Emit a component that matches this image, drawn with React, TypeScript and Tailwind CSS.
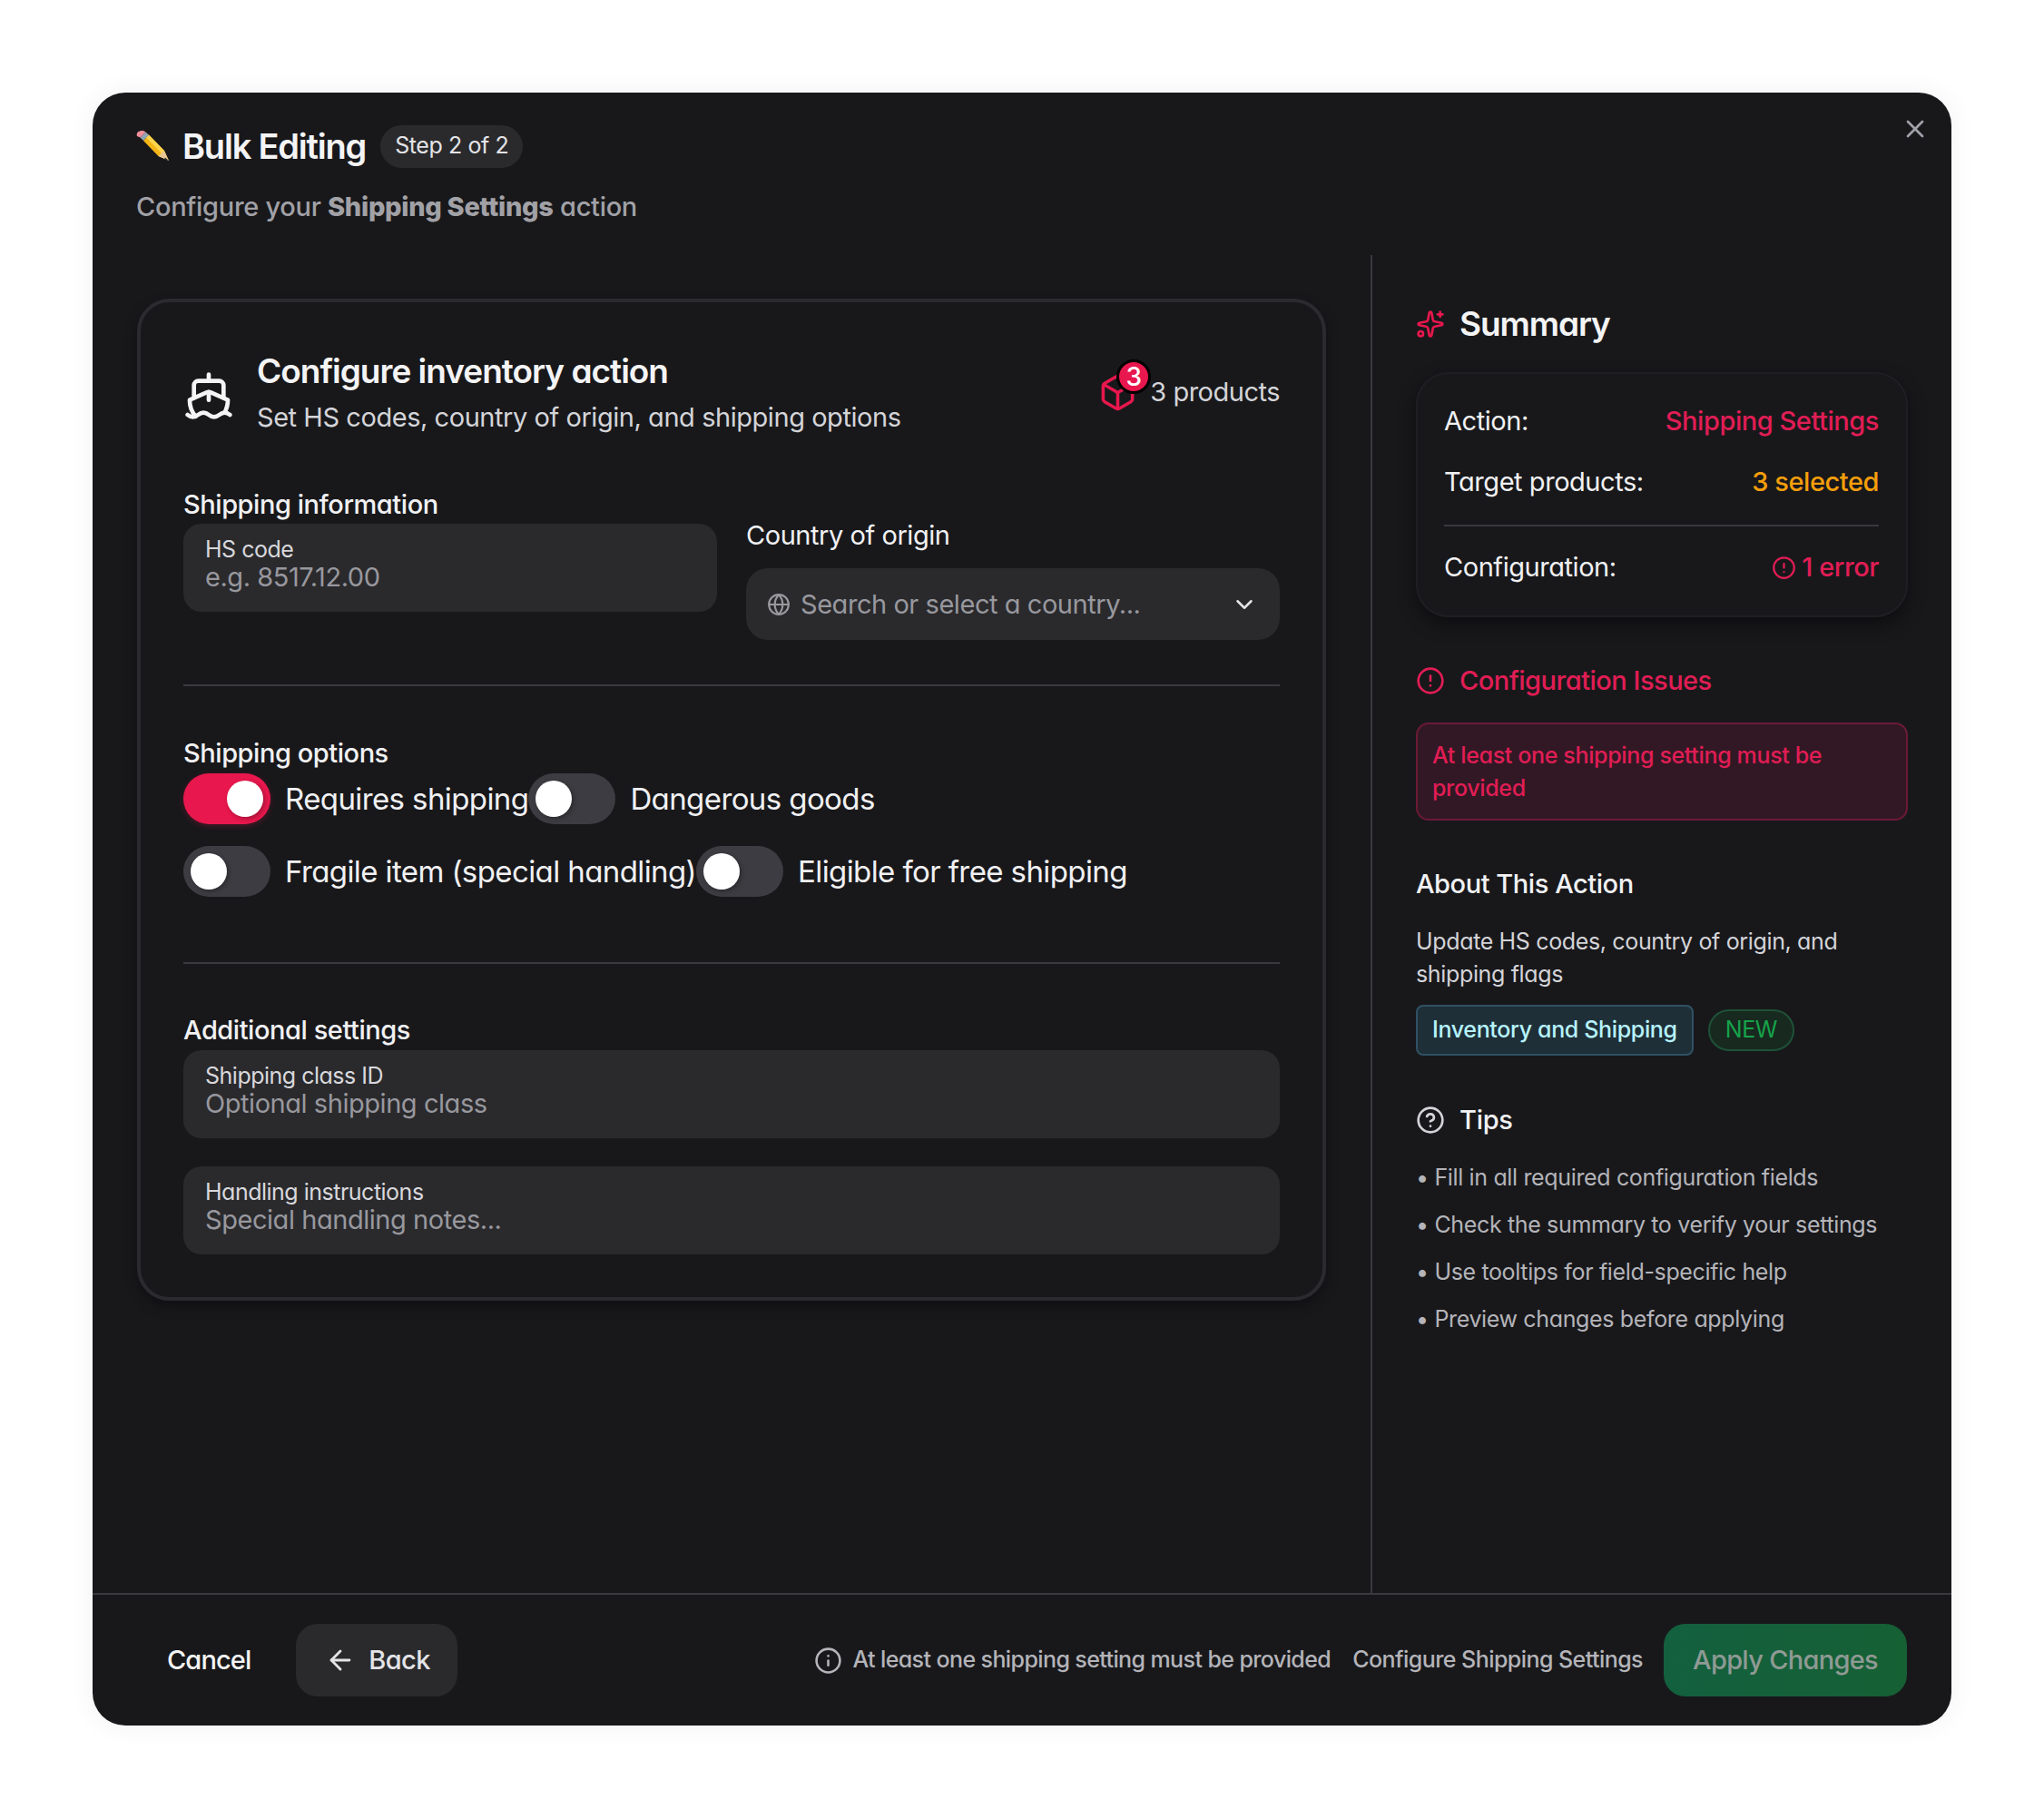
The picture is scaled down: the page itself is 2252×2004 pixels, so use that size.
import { ArrowLeft, Box, ChevronDown, CircleAlert, CircleHelp, Globe, Info, Ship, Sparkles, X } from "lucide-react";

const PencilEmoji = () => (
  <svg width="37" height="34" viewBox="0 0 37 34" className="shrink-0">
    <path d="M8 11 L14 4.5 L31 22 L36 33 L24.500 28 Z" fill="#f5b516" />
    <path d="M14 4.500 L31 22 L28 25 L11 7.500 Z" fill="#fcd34d" />
    <path d="M24.500 28 L36 33 L31 22 Z" fill="#e9c796" />
    <path d="M32 29.500 L36 33 L31 31.500 Z" fill="#2f2f33" />
    <path d="M4.500 7.500 L10.500 1.500 L14 4.500 L8 11 Z" fill="#93a5b5" />
    <path d="M1 6 Q0 2.500 2.500 1 Q5.500 -0.500 8 0 L10.500 1.500 L4.500 7.500 Z" fill="#f08f9c" />
  </svg>
);

function Toggle({ on = false, label }: { on?: boolean; label: string }) {
  return (
    <div className="flex items-center gap-4">
      <div
        className={`flex h-14 w-24 shrink-0 items-center rounded-full px-2 ${
          on ? "justify-end bg-[#e8174d] shadow-[0_2px_6px_rgba(232,23,77,0.25)]" : "justify-start bg-[#3c3c42]"
        }`}
      >
        <div className="size-10 rounded-full bg-white shadow-[2px_2px_5px_rgba(0,0,0,0.3)]" />
      </div>
      <span className="text-[33px] leading-[44px] tracking-[-0.6px] text-[#f1f1f3]">{label}</span>
    </div>
  );
}

function Field({ label, placeholder, className = "" }: { label: string; placeholder: string; className?: string }) {
  return (
    <div className={`flex h-[97px] flex-col rounded-[20px] bg-[#2a2a2d] px-6 pt-3 ${className}`}>
      <span className="text-[25px] leading-[32px] tracking-[-0.5px] text-[#d8d8dc]">{label}</span>
      <span className="text-[29px] leading-[30px] tracking-[-0.45px] text-[#98989e]">{placeholder}</span>
    </div>
  );
}

export default function App() {
  return (
    <div className="min-h-[2004px] bg-white p-[102px] font-['Inter',sans-serif] [font-feature-settings:'cv11']">
      <div className="relative flex h-[1799px] w-[2048px] flex-col overflow-hidden rounded-[36px] bg-[#18181b] shadow-[0_0_30px_rgba(0,0,0,0.06)]">
        <X className="absolute top-[24px] right-[24px] text-[#a1a1aa]" size={32} strokeWidth={2} />

        {/* header */}
        <div className="h-[179px] shrink-0 px-[48px] pt-[35px]">
          <div className="flex items-center">
            <PencilEmoji />
            <h1 className="ml-[14px] text-[38px] leading-[48px] font-semibold tracking-[-1.2px] text-[#f4f4f5]">Bulk Editing</h1>
            <span className="ml-4 flex h-[47px] items-center rounded-full bg-[#2a2a2d] px-4 text-[25px] tracking-[-0.4px] text-[#e4e4e7]">Step 2 of 2</span>
          </div>
          <p className="mt-[21px] text-[29px] leading-[44px] font-medium tracking-[-0.3px] text-[#a1a1a6]">
            Configure your <strong className="font-extrabold">Shipping Settings</strong> action
          </p>
        </div>

        {/* body */}
        <div className="flex min-h-0 flex-1">
          <div className="w-[1410px] shrink-0 border-r-2 border-[#3a3a3e] px-[49px] pt-[48px]">
            <div className="h-[1104px] w-[1310px] rounded-[36px] border-4 border-[#2b2b2f] px-[47px] pt-[54px] shadow-[0_6px_14px_rgba(0,0,0,0.35)]">
              <div className="flex items-center justify-between">
                <div className="flex items-center">
                  <Ship className="mt-[2px] shrink-0 text-[#f4f4f5]" size={56} strokeWidth={2} />
                  <div className="ml-[25px]">
                    <h2 className="text-[37px] leading-[44px] font-semibold tracking-[-1px] text-[#f4f4f5]">Configure inventory action</h2>
                    <p className="mt-[7px] text-[29px] leading-[44px] tracking-[-0.45px] text-[#d4d4d8]">Set HS codes, country of origin, and shipping options</p>
                  </div>
                </div>
                <div className="mb-[5px] flex items-center gap-[14px]">
                  <div className="relative size-[43px]">
                    <Box className="text-[#e8174d]" size={43} strokeWidth={2} />
                    <span className="absolute -top-[15px] left-[20px] flex size-[38px] items-center justify-center rounded-full border-[3px] border-black bg-[#e8174d] text-[28px] font-medium text-white">3</span>
                  </div>
                  <span className="text-[29px] leading-[44px] tracking-[-0.5px] text-[#d4d4d8]">3 products</span>
                </div>
              </div>

              <div className="mt-[56px] grid grid-cols-2 gap-x-[32px]">
                <div>
                  <h3 className="text-[29px] leading-[36px] font-medium tracking-[-0.45px] text-[#f1f1f3]">Shipping information</h3>
                  <Field className="mt-[3px]" label="HS code" placeholder="e.g. 8517.12.00" />
                </div>
                <div className="pt-[34px]">
                  <h3 className="text-[29px] leading-[36px] tracking-[-0.45px] text-[#f1f1f3]">Country of origin</h3>
                  <div className="mt-[18px] flex h-[79px] items-center rounded-[24px] bg-[#2a2a2d] pr-[24px] pl-[23px] text-[#98989e]">
                    <Globe size={26} strokeWidth={2} />
                    <span className="ml-[11px] flex-1 text-[29px] tracking-[-0.45px]">Search or select a country...</span>
                    <ChevronDown className="text-[#e4e4e7]" size={30} strokeWidth={2} />
                  </div>
                </div>
              </div>

              <div className="mt-[49px] h-[2px] bg-[#3a3a3e]" />

              <h3 className="mt-[56px] text-[29px] leading-[36px] font-medium tracking-[-0.45px] text-[#f1f1f3]">Shipping options</h3>
              <div className="mt-[4px] flex flex-col gap-6">
                <div className="flex">
                  <Toggle on label="Requires shipping" />
                  <Toggle label="Dangerous goods" />
                </div>
                <div className="flex">
                  <Toggle label="Fragile item (special handling)" />
                  <Toggle label="Eligible for free shipping" />
                </div>
              </div>

              <div className="mt-[72px] h-[2px] bg-[#3a3a3e]" />

              <h3 className="mt-[55px] text-[29px] leading-[36px] font-medium tracking-[-0.45px] text-[#f1f1f3]">Additional settings</h3>
              <Field className="mt-[4px]" label="Shipping class ID" placeholder="Optional shipping class" />
              <Field className="mt-[31px]" label="Handling instructions" placeholder="Special handling notes..." />
            </div>
          </div>

          <div className="flex-1 px-[48px] pt-[56px]">
            <div className="flex h-[40px] items-center">
              <Sparkles className="text-[#e8174d]" size={32} strokeWidth={2} />
              <h2 className="ml-[16px] text-[37px] leading-[40px] font-semibold tracking-[-1.1px] text-[#f4f4f5]">Summary</h2>
            </div>

            <div className="mt-[33px] rounded-[36px] border-2 border-[#1f1f23] pt-[30px] pr-[30px] pb-[31px] pl-[29px] text-[29px] leading-[44px] tracking-[-0.45px] shadow-[0_8px_20px_rgba(0,0,0,0.45)]">
              <div className="flex justify-between">
                <span className="text-[#f1f1f3]">Action:</span>
                <span className="font-medium text-[#e11d55]">Shipping Settings</span>
              </div>
              <div className="mt-[23px] flex justify-between">
                <span className="text-[#f1f1f3]">Target products:</span>
                <span className="font-medium text-[#f59e0b]">3 selected</span>
              </div>
              <div className="mt-[25px] h-[2px] bg-[#3a3a3e]" />
              <div className="mt-[23px] flex justify-between">
                <span className="text-[#f1f1f3]">Configuration:</span>
                <span className="flex items-center gap-[6px] font-medium text-[#e11d55]">
                  <CircleAlert size={27} strokeWidth={2} />1 error
                </span>
              </div>
            </div>

            <div className="mt-[48px] flex h-[44px] items-center text-[#e11d55]">
              <CircleAlert size={32} strokeWidth={2} />
              <h3 className="ml-[16px] text-[29px] font-medium tracking-[-0.5px]">Configuration Issues</h3>
            </div>
            <div className="mt-[24px] rounded-[14px] border-2 border-[#6b1a35] bg-[#321824] px-[16px] py-[16px] text-[25px] leading-[36px] font-medium tracking-[-0.35px] text-[#e11d55]">
              At least one shipping setting must be provided
            </div>

            <h3 className="mt-[50px] text-[29px] leading-[40px] font-medium tracking-[-0.45px] text-[#f1f1f3]">About This Action</h3>
            <p className="mt-[25px] text-[25px] leading-[36px] tracking-[-0.35px] text-[#d4d4d8]">Update HS codes, country of origin, and shipping flags</p>
            <div className="mt-4 flex items-center gap-4">
              <span className="flex h-14 items-center rounded-[8px] border-2 border-[#2f5163] bg-[#1f2f38] px-[16px] text-[25px] font-medium tracking-[-0.35px] text-[#b6f3fb]">Inventory and Shipping</span>
              <span className="flex h-[46px] items-center rounded-full border-2 border-[#1e5238] bg-[#18291f] px-[17px] text-[25px] tracking-[-0.35px] text-[#16a34a]">NEW</span>
            </div>

            <div className="mt-[51px] flex h-[40px] items-center">
              <CircleHelp className="text-[#d4d4d8]" size={32} strokeWidth={2} />
              <h3 className="ml-[16px] text-[29px] font-medium tracking-[-0.3px] text-[#f1f1f3]">Tips</h3>
            </div>
            <ul className="mt-[25px] flex flex-col gap-4 text-[25px] leading-[36px] tracking-[-0.35px] text-[#b4b4b9]">
              <li>• Fill in all required configuration fields</li>
              <li>• Check the summary to verify your settings</li>
              <li>• Use tooltips for field-specific help</li>
              <li>• Preview changes before applying</li>
            </ul>
          </div>
        </div>

        {/* footer */}
        <div className="flex h-[146px] shrink-0 items-center justify-between border-t-2 border-[#3a3a3e] pr-[49px] pl-[82px]">
          <div className="flex items-center">
            <span className="text-[29px] font-medium tracking-[-0.9px] text-[#f4f4f5]">Cancel</span>
            <button className="ml-[50px] flex h-20 items-center rounded-[24px] bg-[#2a2a2d] pr-[30px] pl-[32px] text-[29px] font-medium tracking-[-0.6px] text-[#e4e4e7]">
              <ArrowLeft size={34} strokeWidth={2} />
              <span className="ml-[14px]">Back</span>
            </button>
          </div>
          <div className="flex items-center">
            <Info className="text-[#b4b4b9]" size={31} strokeWidth={2} />
            <span className="ml-[11px] text-[25px] font-medium tracking-[-0.6px] text-[#b4b4b9]">At least one shipping setting must be provided</span>
            <span className="ml-[24px] text-[25px] font-medium tracking-[-0.55px] text-[#b4b4b9]">Configure Shipping Settings</span>
            <button className="ml-[23px] flex h-20 items-center rounded-[24px] bg-gradient-to-r from-[#13603f] to-[#166034] px-[32px] text-[29px] font-medium tracking-[-0.7px] text-[#8f9a94]">Apply Changes</button>
          </div>
        </div>
      </div>
    </div>
  );
}
